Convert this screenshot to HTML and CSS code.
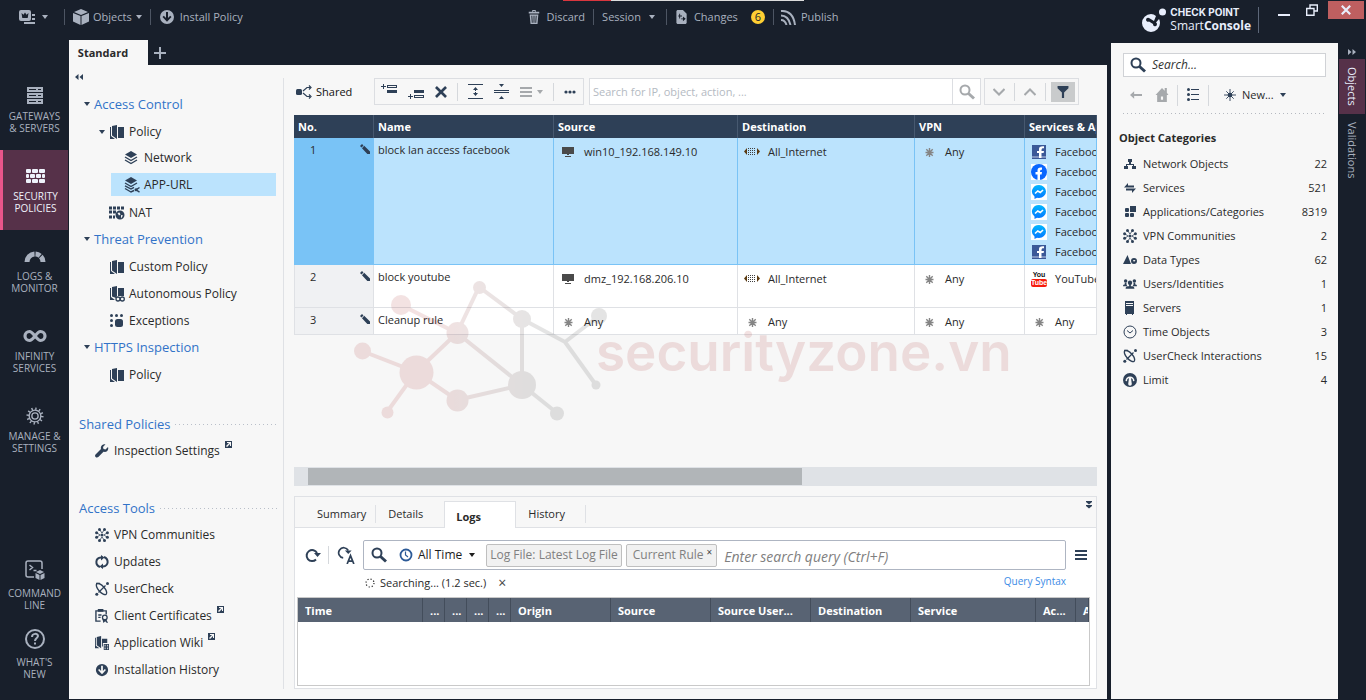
FILE: index.html
```html
<!DOCTYPE html>
<html lang="en">
<head>
<meta charset="utf-8">
<title>SmartConsole</title>
<link rel="stylesheet" href="styles.css">
</head>
<body>
<svg class="sprite" aria-hidden="true">
  <symbol id="i-caret" viewBox="0 0 6 4"><path d="M0 0h6L3 4z"/></symbol>
  <symbol id="i-menu-app" viewBox="0 0 16 16"><path fill-rule="evenodd" d="M2 1h8a2 2 0 0 1 2 2v7a2 2 0 0 1-2 2H2a2 2 0 0 1-2-2V3a2 2 0 0 1 2-2zM2.500 4l.8 5h5.400l.8-5-2 1.800L6 3.500 4.500 5.800z"/><path d="M13 5h3v2h-3zM13 9h3v2h-3zM5 13h11v2H5z"/></symbol>
  <symbol id="i-cube" viewBox="0 0 16 16"><path d="M8 0l7 3-7 3-7-3zM0 4l7.500 3v9L0 12.500zM16 4L8.500 7v9L16 12.500z"/></symbol>
  <symbol id="i-down" viewBox="0 0 16 16"><path fill-rule="evenodd" d="M8 1a7 7 0 1 0 0 14A7 7 0 0 0 8 1zM7 3h2v6l2.200-2.200L12.500 8 8 12.800 3.500 8l1.300-1.200L7 9z"/></symbol>
  <symbol id="i-trash" viewBox="0 0 14 16"><path fill-rule="evenodd" d="M5 0h4v2h4v2H1V2h4zM6 1v1h2V1zM2 5h10l-1 11H3zM4 6.500l.5 8h1l-.5-8zM6.500 6.500v8h1v-8zM9 6.500l-.5 8h1l.5-8z"/></symbol>
  <symbol id="i-changes" viewBox="0 0 12 15"><path fill-rule="evenodd" d="M1 0h6l4 4v10l-1 1H1l-1-1V1zM3 4v2H2v1h1v2h1V7h2V6H4V4zM7 7v2H5v1h2v2l3-2.500z"/></symbol>
  <symbol id="i-publish" viewBox="0 0 16 16"><path fill="none" stroke="currentColor" stroke-width="2" d="M1 2c8-1 13 5 14 14M1 6.500c5 0 8 3 9.500 9.500M1 11c3 0 4.500 1.500 5.500 5"/></symbol>
  <symbol id="i-logo" viewBox="0 0 26 26"><path fill-rule="evenodd" d="M10 7a9 9 0 1 0 9 9c0-1.500-.5-3-1-4l-3 3.500a2 2 0 1 1-3 1.500L8 14.500A2 2 0 1 1 8 11l5 3 2-5A9 9 0 0 0 10 7z"/><circle cx="21.500" cy="5" r="3.500"/></symbol>
  <symbol id="i-servers" viewBox="0 0 18 18"><path fill-rule="evenodd" d="M1 0h16v5H1zM3 2v1h7V2zM12 2v1h3V2zM1 6h16v5H1zM3 8v1h7V8zM12 8v1h3V8zM1 12h16v5H1zM3 14v1h7v-1zM12 14v1h3v-1z"/></symbol>
  <symbol id="i-wall" viewBox="0 0 19 14"><rect width="5" height="4" rx="1"/><rect x="6" width="6" height="4" rx="1"/><rect x="13" width="6" height="4" rx="1"/><rect y="5" width="3" height="4" rx="1"/><rect x="4" y="5" width="5" height="4" rx="1"/><rect x="10" y="5" width="5" height="4" rx="1"/><rect x="16" y="5" width="3" height="4" rx="1"/><rect y="10" width="5" height="4" rx="1"/><rect x="6" y="10" width="6" height="4" rx="1"/><rect x="13" y="10" width="6" height="4" rx="1"/></symbol>
  <symbol id="i-gauge" viewBox="0 0 22 12"><path fill="none" stroke="currentColor" stroke-width="5" stroke-dasharray="12 1 5 1 10" d="M3 12a8 8 0 0 1 16 0"/></symbol>
  <symbol id="i-infinity" viewBox="0 0 24 13"><path fill="none" stroke="currentColor" stroke-width="3.200" d="M12 6.500C9 10.500 8 11 6.500 11a4.500 4.500 0 0 1 0-9C10 2 14 11 17.500 11a4.500 4.500 0 0 0 0-9C16 2 15 2.500 12 6.500z"/></symbol>
  <symbol id="i-gear" viewBox="0 0 20 20"><g fill="none" stroke="currentColor"><circle cx="10" cy="10" r="8" stroke-width="3" stroke-dasharray="1.500 2.690"/><circle cx="10" cy="10" r="6.500" stroke-width="1.500"/><circle cx="10" cy="10" r="3.500" stroke-width="1.500"/></g></symbol>
  <symbol id="i-terminal" viewBox="0 0 20 20"><path fill="none" stroke="currentColor" stroke-width="1.500" d="M9 17H3a2 2 0 0 1-2-2V3a2 2 0 0 1 2-2h12a2 2 0 0 1 2 2v6M4.500 5l3 2.500-3 2.500M8.500 10.500h3"/><path d="M15 10l4 2-4 2-4-2zM10.500 13l4 2v5l-4-2zM19.500 13l-4 2v5l4-2z"/></symbol>
  <symbol id="i-help" viewBox="0 0 22 22"><g fill="none" stroke="currentColor" stroke-width="2"><circle cx="11" cy="11" r="9"/><path d="M8 9c0-4 6-4 6-1 0 2-3 2-3 5"/></g><path d="M10 14.500h2v2h-2z"/></symbol>
  <symbol id="i-book" viewBox="0 0 16 16"><path d="M1 3h1v9l4 3H1zM3 2l5-1v14l-5-3.500zM9 3h6v11H9z"/></symbol>
  <symbol id="i-book-inf" viewBox="0 0 16 16"><path d="M1 2h1v9l4 3H1zM3 1l5-1v10l-1 2-4-1.500zM9 2h6v8H9z"/><g fill="none" stroke="currentColor" stroke-width="1.300"><circle cx="9" cy="13" r="2"/><circle cx="13.300" cy="13" r="2"/></g></symbol>
  <symbol id="i-book-app" viewBox="0 0 16 16"><path fill-rule="evenodd" d="M0 2h1v9l4 3H0zM2 1l5-1v14l-5-3.500zM8 3h6v5H9v4H8zM10 9h6v7h-6zM11 10v2h1v-2zM14 10v2h1v-2zM11 13v2h1v-2zM14 13v2h1v-2z"/></symbol>
  <symbol id="i-layers" viewBox="0 0 16 16"><path d="M7 1l6 3.500L7 8 1 4.500z"/><path fill="none" stroke="currentColor" stroke-width="1.400" d="M1 7l6 3.500L13 7M1 10l6 3.500 6-3.500"/></symbol>
  <symbol id="i-layers-share" viewBox="0 0 16 16"><path d="M7 0l6 3.500L7 7 1 3.500z"/><path fill="none" stroke="currentColor" stroke-width="1.400" d="M1 6l6 3.500L13 6M1 8.800L7 12l3-1.700M1 11.500L7 15l3-1.500M15.500 10.500l-3.500 2.300 3.500 2.300"/><circle cx="12" cy="12.800" r="1.500"/></symbol>
  <symbol id="i-nat" viewBox="0 0 16 13"><path d="M0 0h3v3H0zM4 0h3v3H4zM8 0h3v3H8zM12 0h3v3h-3zM0 4h3v3H0zM4 4h3v3H4zM0 9h3v3H0zM4 9h2v3H4z"/><path fill-rule="evenodd" d="M11 4a4.500 4.500 0 1 0 0 9 4.500 4.500 0 0 0 0-9zM8.500 6.500l2-.5 1 2-1.500 1zM12 8.500l2 .5-2 3z"/></symbol>
  <symbol id="i-except" viewBox="-1 -1 16 16"><circle cx="1.500" cy="1.500" r="1.500"/><circle cx="6.500" cy="1.500" r="1.500"/><circle cx="11.500" cy="1.500" r="1.500"/><circle cx="1.500" cy="6.500" r="1.500"/><circle cx="1.500" cy="11.500" r="1.500"/><rect x="5" y="5" width="8" height="8" rx="2.500"/></symbol>
  <symbol id="i-wrench" viewBox="0 0 14 14"><path d="M13 3L10.500 5.500 8.500 5 8 3l2.500-2.700C8 -.5 5 2 6 5L.5 10.500c-1.500 2 1 4 2.800 2.600L8.500 7.800C12 8.500 14 6 13 3z"/></symbol>
  <symbol id="i-ext" viewBox="0 0 7 7"><path fill-rule="evenodd" d="M0 0h7v7H0zM2 1v1h2L1 5l1 1 3-3v2h1V1z"/></symbol>
  <symbol id="i-vpn" viewBox="0 0 14 14"><path stroke="currentColor" stroke-width=".8" d="M4.500 1.500L7 5l2.500-3.500M4.500 12.500L7 9l2.500 3.500M1.500 4.500L5 7 1.500 9.500M12.500 4.500L9 7l3.500 2.500" fill="none"/><circle cx="7" cy="7" r="1.600"/><circle cx="4.500" cy="1.600" r="1.500"/><circle cx="9.500" cy="1.600" r="1.500"/><circle cx="4.500" cy="12.400" r="1.500"/><circle cx="9.500" cy="12.400" r="1.500"/><circle cx="1.600" cy="4.800" r="1.500"/><circle cx="1.600" cy="9.200" r="1.500"/><circle cx="12.400" cy="4.800" r="1.500"/><circle cx="12.400" cy="9.200" r="1.500"/></symbol>
  <symbol id="i-update" viewBox="0 0 14 14"><path fill="none" stroke="currentColor" stroke-width="2" d="M5 12C0 10 0 3 6 2.500M9 2c5 2 5 9-1 9.500"/><path d="M6 0l3.500 2.500L6 5.500zM8 8.500V14l-3.500-2.500z"/></symbol>
  <symbol id="i-check" viewBox="0 0 14 14"><ellipse cx="6.500" cy="7" rx="7" ry="3" transform="rotate(48 6.500 7)" fill="none" stroke="currentColor" stroke-width="1.400"/><path stroke="currentColor" stroke-width="1.300" d="M1 1.500h4M3.500 10.500l7-7"/><circle cx="12.500" cy="1.500" r="1.500"/><circle cx="1.800" cy="12.200" r="1.500"/></symbol>
  <symbol id="i-cert" viewBox="0 0 15 15"><path fill="none" stroke="currentColor" stroke-width="1.500" d="M6 13H1V2h11v4M3.500 6.500H7M3.500 9H6"/><path d="M3 0h6v3H3zM8 11l4 0 2 4-2-.5L11 13l-2 2z"/><circle cx="10.500" cy="9" r="2.500" fill="none" stroke="currentColor" stroke-width="1.400"/></symbol>
  <symbol id="i-collapse" viewBox="0 0 8 6"><path d="M3.500 0v6L0 3zM8 0v6L4.500 3z"/></symbol>
  <symbol id="i-shared" viewBox="0 0 16 14"><rect y="4" width="6" height="6" rx="1.500"/><path fill="none" stroke="currentColor" stroke-width="1.200" d="M7 6l4-3.500h3M7 8l4 3.500h3M13 .5l2 2-2 2M13 9.500l2 2-2 2"/></symbol>
  <symbol id="i-add-above" viewBox="0 0 16 16"><path fill-rule="evenodd" d="M2 0h1v2h2v1H3v2H2V3H0V2h2zM6 1h10v3H6zM7 2v1h8V2zM6 6h10v3H6z"/></symbol>
  <symbol id="i-add-below" viewBox="0 0 16 16"><path fill-rule="evenodd" d="M6 6h10v3H6zM6 11h10v3H6zM7 12v1h8v-1zM2 10h1v2h2v1H3v2H2v-2H0v-1h2z"/></symbol>
  <symbol id="i-x" viewBox="0 0 10 10"><path fill="none" stroke="currentColor" stroke-width="2.200" d="M.8.8l8.400 8.400M9.200.8L.8 9.200"/></symbol>
  <symbol id="i-expand" viewBox="0 0 15 15"><path d="M0 0h15v1H0zM0 14h15v1H0zM7.500 3L10 6H8v1H7V6H5zM7.500 12L5 9h2V8h1v1h2z"/></symbol>
  <symbol id="i-squeeze" viewBox="0 0 15 15"><path d="M0 6h15v1H0zM0 8h15v1H0zM5 0h5L7.500 3zM5 15h5l-2.500-3z"/></symbol>
  <symbol id="i-lines" viewBox="0 0 12 10"><path d="M0 0h12v2H0zM0 4h12v2H0zM0 8h12v2H0z"/></symbol>
  <symbol id="i-dots" viewBox="0 0 12 4"><circle cx="2" cy="2" r="1.600"/><circle cx="6" cy="2" r="1.600"/><circle cx="10" cy="2" r="1.600"/></symbol>
  <symbol id="i-search" viewBox="0 0 16 16"><circle cx="6" cy="6" r="4.500" fill="none" stroke="currentColor" stroke-width="2"/><path stroke="currentColor" stroke-width="3" d="M9.500 9.500l5.500 5"/></symbol>
  <symbol id="i-chev-down" viewBox="0 0 12 8"><path fill="none" stroke="currentColor" stroke-width="2" d="M.5 1L6 6.500 11.500 1"/></symbol>
  <symbol id="i-chev-up" viewBox="0 0 12 8"><path fill="none" stroke="currentColor" stroke-width="2" d="M.5 7L6 1.500 11.500 7"/></symbol>
  <symbol id="i-funnel" viewBox="0 0 10 11"><path d="M0 0h10v2L6 6v5H4V6L0 2z"/></symbol>
  <symbol id="i-pencil" viewBox="0 0 10 10"><path d="M2 0l1.500 1.500-2 2L0 2zM4.200 1.800L10 7.500V10H7.300L2 4.300z"/></symbol>
  <symbol id="i-host" viewBox="0 0 12 10"><path d="M0 0h12v7H0zM5 7h2v1H5zM3 9h6v1H3z"/></symbol>
  <symbol id="i-net" viewBox="0 0 16 16"><path d="M0 7.500L3 4v7zM16 7.500L13 4v7z" fill="#5b3a10"/><path fill="none" stroke="#3e3e3e" stroke-dasharray="1 1" d="M4 4.500h8M4 6.500h8M4 8.500h8M4 10.500h8"/></symbol>
  <symbol id="i-any" viewBox="0 0 9 9"><path stroke="currentColor" stroke-width="1.400" d="M4.500 0v9M.5 4.500h8M1.300 1.300l6.400 6.400M7.700 1.300L1.300 7.700"/></symbol>
  <symbol id="i-fb-sq" viewBox="0 0 16 16"><path fill="#3b5998" d="M1 1h14v14H1z"/><path fill="#7d92bf" d="M1 12h14v2H1z"/><path fill="#fff" d="M8 14V9H6V7h2V5c0-2 1.500-3 5-2.700v2C11 4.200 10.500 4.500 10.500 7H13l-.4 2h-2.100v5z"/></symbol>
  <symbol id="i-fb-round" viewBox="0 0 16 16"><path fill="#fff" d="M0 0h16v16H0z"/><circle cx="8" cy="8" r="8" fill="#0866ff"/><path fill="#fff" d="M6.500 16v-5.500H4.500V8h2V6.500c0-2.500 1.500-3.500 4.500-3v2.200c-1.500-.1-2 .3-2 2.300h2l-.4 2.500H9V16z"/></symbol>
  <symbol id="i-msgr" viewBox="0 0 16 16"><path fill="#fff" d="M0 0h16v16H0z"/><path fill="url(#msgr)" d="M8 1a7 6.500 0 0 1 0 13l-2-.2L3.500 15v-2.500A7 6.500 0 0 1 8 1z"/><path fill="none" stroke="#fff" stroke-width="1.600" d="M4 9.500L6.800 7l2.500 1.500L12 6"/></symbol>
  <symbol id="i-refresh" viewBox="0 0 16 14"><path fill="none" stroke="currentColor" stroke-width="2" d="M11 11.500A5.500 5.500 0 1 1 12 5"/><path d="M9 5h7l-3.500 4z"/></symbol>
  <symbol id="i-auto" viewBox="0 0 16 16"><path fill="none" stroke="currentColor" stroke-width="1.500" d="M5.500 10.500A4.500 4.500 0 1 1 10 4M9 16l3-7.500 3 7.500M10 13.500h4"/><path d="M7 4h6l-3 3z"/></symbol>
  <symbol id="i-clock" viewBox="0 0 14 14"><circle cx="7" cy="7" r="5.500" fill="none" stroke="currentColor" stroke-width="1.800"/><path fill="none" stroke="currentColor" stroke-width="1.200" d="M6.500 3.500V7L9 9"/></symbol>
  <symbol id="i-spin" viewBox="0 0 10 10"><circle cx="5" cy="5" r="4" fill="none" stroke="currentColor" stroke-width="1.200" stroke-dasharray="1.200 1.950"/></symbol>
  <symbol id="i-dbl-down" viewBox="0 0 6 8"><path d="M0 0h6v1L3 3.500 0 1zM0 4h6v1L3 7.500 0 5z"/></symbol>
  <symbol id="i-back" viewBox="0 0 13 8"><path d="M4.500 0v3H13v2H4.500v3L0 4z"/></symbol>
  <symbol id="i-home" viewBox="0 0 12 13"><path fill-rule="evenodd" d="M6 0l2.500 2.500V0h2v4.500L12 6.500h-1.500V13h-9V6.500H0zM5 8v3h2V8z"/></symbol>
  <symbol id="i-list" viewBox="0 0 12 14"><path d="M4 1h8v1H4zM4 6h8v1H4zM4 11h8v1H4z"/><circle cx="1.500" cy="1.500" r="1.500"/><circle cx="1.500" cy="6.500" r="1.500"/><circle cx="1.500" cy="11.500" r="1.500"/></symbol>
  <symbol id="i-star" viewBox="0 0 13 13"><path stroke="currentColor" stroke-width="1" d="M6.500 0v13M0 6.500h13M2.500 2.500l8 8M10.500 2.500l-8 8"/><circle cx="6.500" cy="6.500" r="2.500"/></symbol>
  <symbol id="i-nodes" viewBox="-1 -2 14 14"><path d="M4 0h4v3H4zM0 7h4v3H0zM8 7h4v3H8zM5 3h2v2h3v2H9V6H3v1H2V5h3z"/></symbol>
  <symbol id="i-svc" viewBox="-1 -2 14 14"><path d="M4 0v2.500h6v2H0zM8 10V7.500H2v-2h10z"/></symbol>
  <symbol id="i-apps" viewBox="-1 -1 14 14"><rect x="1" y="2" width="4" height="4" rx="1"/><rect x="6" width="6" height="6"/><rect x="1" y="7" width="4" height="4" rx="1"/><rect x="6" y="7" width="4" height="4" rx="1"/></symbol>
  <symbol id="i-types" viewBox="0 -2 14 14"><path fill-rule="evenodd" d="M4.500 0L8 9H0zM11 3a3 3 0 1 0 0 6 3 3 0 0 0 0-6zM10 5h2.500L11 7z"/></symbol>
  <symbol id="i-users" viewBox="0 0 16 11"><circle cx="3" cy="2" r="2"/><circle cx="13" cy="2" r="2"/><circle cx="8" cy="4" r="2.500"/><path d="M0 8c0-2 1-2 2-2V4h2v2l1 2zM16 8c0-2-1-2-2-2V4h-2v2l-1 2zM3 11c0-3 2-3 4-3V5h2v3c2 0 4 0 4 3z"/></symbol>
  <symbol id="i-server" viewBox="0 0 14 14"><path fill-rule="evenodd" d="M2 0h9v13h-1v1H9v-1H4v1H3v-1H2zM3 2v1h7V2zM3 4v1h7V4z"/></symbol>
  <symbol id="i-time" viewBox="0 0 14 14"><circle cx="7" cy="7" r="6" fill="none" stroke="currentColor"/><path fill="none" stroke="currentColor" d="M4 5.500L7 8l3-2.500"/></symbol>
  <symbol id="i-limit" viewBox="0 0 14 14"><path fill-rule="evenodd" d="M7 0a7 7 0 1 0 0 14A7 7 0 0 0 7 0zM2.500 8a4.500 4.500 0 0 1 9 0l-1.500.3A3 3 0 0 0 8 5l.8 6a1.800 1.800 0 1 1-3.600 0L6 5a3 3 0 0 0-2 3.300z"/></symbol>
  <symbol id="i-min" viewBox="0 0 12 12"><path d="M0 10h12v2H0z"/></symbol>
  <symbol id="i-restore" viewBox="0 0 12 12"><path fill="none" stroke="currentColor" stroke-width="1.400" d="M4 4V1h7.300v6H8M.7 4.500H8v6.800H.7z"/></symbol>
  <symbol id="i-plus" viewBox="0 0 12 12"><path d="M5 0h2v5h5v2H7v5H5V7H0V5h5z"/></symbol>
  <defs><linearGradient id="msgr" x1="0" y1="0" x2="0" y2="1"><stop offset="0" stop-color="#00b8ff"/><stop offset="1" stop-color="#0874ff"/></linearGradient></defs>
</svg>

<div class="app">
  <header class="topbar">
    <div class="top-progress" aria-hidden="true"></div>
    <div class="top-group">
      <button class="top-btn top-app" aria-label="Menu"><svg class="ic16"><use href="#i-menu-app"/></svg><svg class="caret"><use href="#i-caret"/></svg></button>
      <button class="top-btn top-sep top-obj"><svg class="ic16"><use href="#i-cube"/></svg>Objects<svg class="caret"><use href="#i-caret"/></svg></button>
      <button class="top-btn top-sep"><svg class="ic16"><use href="#i-down"/></svg>Install Policy</button>
    </div>
    <div class="top-group">
      <button class="top-btn"><svg class="ic14"><use href="#i-trash"/></svg>Discard</button>
      <button class="top-btn top-sep top-ses">Session<svg class="caret"><use href="#i-caret"/></svg></button>
      <button class="top-btn top-sep"><svg class="ic14"><use href="#i-changes"/></svg>Changes<span class="badge">6</span></button>
      <button class="top-btn top-sep top-pub"><svg class="ic16"><use href="#i-publish"/></svg>Publish</button>
    </div>
    <div class="top-right">
      <div class="brand">
        <svg class="brand-mark"><use href="#i-logo"/></svg>
        <div><div class="brand-a">CHECK POINT</div><div class="brand-b">Smart<b>Console</b></div></div>
      </div>
      <button class="win-btn" aria-label="Minimize"><svg class="ic12"><use href="#i-min"/></svg></button>
      <button class="win-btn" aria-label="Restore"><svg class="ic12"><use href="#i-restore"/></svg></button>
      <button class="win-btn win-close" aria-label="Close"><svg class="ic10"><use href="#i-x"/></svg></button>
    </div>
  </header>

  <div class="body">
    <nav class="rail">
      <button class="rail-item"><svg class="r18"><use href="#i-servers"/></svg><span>GATEWAYS<br>&amp; SERVERS</span></button>
      <button class="rail-item rail-on"><svg class="r19"><use href="#i-wall"/></svg><span>SECURITY<br>POLICIES</span></button>
      <button class="rail-item"><svg class="r22"><use href="#i-gauge"/></svg><span>LOGS &amp;<br>MONITOR</span></button>
      <button class="rail-item"><svg class="r24"><use href="#i-infinity"/></svg><span>INFINITY<br>SERVICES</span></button>
      <button class="rail-item"><svg class="r20"><use href="#i-gear"/></svg><span>MANAGE &amp;<br>SETTINGS</span></button>
      <div class="rail-foot">
        <button class="rail-item"><svg class="r20"><use href="#i-terminal"/></svg><span>COMMAND<br>LINE</span></button>
        <button class="rail-item"><svg class="r22"><use href="#i-help"/></svg><span>WHAT'S<br>NEW</span></button>
      </div>
    </nav>

    <div class="main">
      <div class="doc-tabs">
        <button class="doc-tab">Standard</button>
        <button class="doc-add" aria-label="New tab"><svg class="ic12"><use href="#i-plus"/></svg></button>
      </div>
      <div class="work">
        <aside class="tree">
          <button class="tree-collapse" aria-label="Collapse"><svg class="dbl"><use href="#i-collapse"/></svg></button>
          <a class="row head" href="#"><svg class="caret"><use href="#i-caret"/></svg>Access Control</a>
          <a class="row l1 open" href="#"><svg class="caret"><use href="#i-caret"/></svg><svg class="ic16"><use href="#i-book"/></svg>Policy</a>
          <a class="row l2" href="#"><svg class="ic16"><use href="#i-layers"/></svg>Network</a>
          <a class="row l2 picked" href="#"><svg class="ic16"><use href="#i-layers-share"/></svg>APP-URL</a>
          <a class="row l1" href="#"><svg class="ic16"><use href="#i-nat"/></svg>NAT</a>
          <a class="row head" href="#"><svg class="caret"><use href="#i-caret"/></svg>Threat Prevention</a>
          <a class="row l1" href="#"><svg class="ic16"><use href="#i-book"/></svg>Custom Policy</a>
          <a class="row l1" href="#"><svg class="ic16"><use href="#i-book-inf"/></svg>Autonomous Policy</a>
          <a class="row l1" href="#"><svg class="ic16"><use href="#i-except"/></svg>Exceptions</a>
          <a class="row head" href="#"><svg class="caret"><use href="#i-caret"/></svg>HTTPS Inspection</a>
          <a class="row l1" href="#"><svg class="ic16"><use href="#i-book"/></svg>Policy</a>
          <h2 class="group">Shared Policies</h2>
          <a class="row tool" href="#"><svg class="ic14"><use href="#i-wrench"/></svg>Inspection Settings<svg class="ext"><use href="#i-ext"/></svg></a>
          <h2 class="group group-last">Access Tools</h2>
          <a class="row tool" href="#"><svg class="ic14"><use href="#i-vpn"/></svg>VPN Communities</a>
          <a class="row tool" href="#"><svg class="ic14"><use href="#i-update"/></svg>Updates</a>
          <a class="row tool" href="#"><svg class="ic14"><use href="#i-check"/></svg>UserCheck</a>
          <a class="row tool" href="#"><svg class="ic14"><use href="#i-cert"/></svg>Client Certificates<svg class="ext"><use href="#i-ext"/></svg></a>
          <a class="row tool" href="#"><svg class="ic14"><use href="#i-book-app"/></svg>Application Wiki<svg class="ext"><use href="#i-ext"/></svg></a>
          <a class="row tool" href="#"><svg class="ic14"><use href="#i-down"/></svg>Installation History</a>
        </aside>

        <section class="policy">
          <div class="toolbar">
            <span class="shared"><svg class="ic16"><use href="#i-shared"/></svg>Shared</span>
            <div class="box tools">
              <button aria-label="Add rule above"><svg class="ic16"><use href="#i-add-above"/></svg></button>
              <button aria-label="Add rule below"><svg class="ic16"><use href="#i-add-below"/></svg></button>
              <button aria-label="Delete"><svg class="ic12"><use href="#i-x"/></svg></button>
              <i class="bar"></i>
              <button aria-label="Expand"><svg class="ic15"><use href="#i-expand"/></svg></button>
              <button aria-label="Collapse rows"><svg class="ic15"><use href="#i-squeeze"/></svg></button>
              <button class="dim" aria-label="Rows"><svg class="ic12"><use href="#i-lines"/></svg><svg class="caret"><use href="#i-caret"/></svg></button>
              <i class="bar"></i>
              <button aria-label="More"><svg class="ic12"><use href="#i-dots"/></svg></button>
            </div>
            <div class="box find">
              <input type="text" aria-label="Search rules" placeholder="Search for IP, object, action, ...">
              <button aria-label="Search"><svg class="ic16"><use href="#i-search"/></svg></button>
            </div>
            <div class="box steps">
              <button class="dim" aria-label="Next"><svg class="ic12"><use href="#i-chev-down"/></svg></button>
              <i class="bar"></i>
              <button class="dim" aria-label="Previous"><svg class="ic12"><use href="#i-chev-up"/></svg></button>
              <i class="bar"></i>
              <button class="filter" aria-label="Filter"><svg class="ic12"><use href="#i-funnel"/></svg></button>
            </div>
          </div>

          <div class="rules-area">
            <table class="rules">
              <colgroup><col class="c-no"><col class="c-name"><col class="c-src"><col class="c-dst"><col class="c-vpn"><col></colgroup>
              <thead><tr><th>No.</th><th>Name</th><th>Source</th><th>Destination</th><th>VPN</th><th>Services &amp; Applications</th></tr></thead>
              <tbody>
                <tr class="sel">
                  <td class="no"><div><span>1</span><svg class="ic10"><use href="#i-pencil"/></svg></div></td>
                  <td>block lan access facebook</td>
                  <td><div class="obj"><svg class="ic12"><use href="#i-host"/></svg>win10_192.168.149.10</div></td>
                  <td><div class="obj"><svg class="ic16"><use href="#i-net"/></svg>All_Internet</div></td>
                  <td><div class="obj any"><svg class="ic9"><use href="#i-any"/></svg>Any</div></td>
                  <td>
                    <div class="obj"><svg class="ic16"><use href="#i-fb-sq"/></svg>Facebook</div>
                    <div class="obj"><svg class="ic16"><use href="#i-fb-round"/></svg>Facebook</div>
                    <div class="obj"><svg class="ic16"><use href="#i-msgr"/></svg>Facebook</div>
                    <div class="obj"><svg class="ic16"><use href="#i-msgr"/></svg>Facebook</div>
                    <div class="obj"><svg class="ic16"><use href="#i-msgr"/></svg>Facebook</div>
                    <div class="obj"><svg class="ic16"><use href="#i-fb-sq"/></svg>Facebook</div>
                  </td>
                </tr>
                <tr class="mid">
                  <td class="no"><div><span>2</span><svg class="ic10"><use href="#i-pencil"/></svg></div></td>
                  <td>block youtube</td>
                  <td><div class="obj"><svg class="ic12"><use href="#i-host"/></svg>dmz_192.168.206.10</div></td>
                  <td><div class="obj"><svg class="ic16"><use href="#i-net"/></svg>All_Internet</div></td>
                  <td><div class="obj any"><svg class="ic9"><use href="#i-any"/></svg>Any</div></td>
                  <td><div class="obj"><span class="yt"><span>You</span><span class="yt-b">Tube</span></span>YouTube</div></td>
                </tr>
                <tr>
                  <td class="no"><div><span>3</span><svg class="ic10"><use href="#i-pencil"/></svg></div></td>
                  <td>Cleanup rule</td>
                  <td><div class="obj any"><svg class="ic9"><use href="#i-any"/></svg>Any</div></td>
                  <td><div class="obj any"><svg class="ic9"><use href="#i-any"/></svg>Any</div></td>
                  <td><div class="obj any"><svg class="ic9"><use href="#i-any"/></svg>Any</div></td>
                  <td><div class="obj any"><svg class="ic9"><use href="#i-any"/></svg>Any</div></td>
                </tr>
              </tbody>
            </table>
            <div class="mark">
              <svg class="mark-net" viewBox="350 275 265 150">
                <defs><linearGradient id="fade" gradientUnits="userSpaceOnUse" x1="430" y1="0" x2="540" y2="0"><stop offset="0" stop-color="#a01a1a"/><stop offset="1" stop-color="#2c2c2c"/></linearGradient></defs>
                <path fill="none" stroke="url(#fade)" stroke-width="4" d="M401 305L457 333L479 287L522 319L565 342L599 316M565 342L596 385M457 333L416 372L457 400L522 385L557 413M457 333L522 385V319M362 351L416 372L387 412"/>
                <g fill="url(#fade)"><circle cx="401" cy="305" r="10"/><circle cx="479.500" cy="287.500" r="6.500"/><circle cx="457.500" cy="333" r="11"/><circle cx="362.500" cy="351" r="8.500"/><circle cx="416.500" cy="372.500" r="17"/><circle cx="387.500" cy="412.500" r="6"/><circle cx="457.500" cy="400.500" r="11"/><circle cx="522" cy="385" r="14"/><circle cx="522" cy="319" r="9"/><circle cx="599" cy="316" r="8"/><circle cx="596" cy="385" r="4.500"/><circle cx="557" cy="413.500" r="7"/></g>
              </svg>
              <span class="mark-text">securityzone.vn</span>
            </div>
          </div>

          <div class="hscroll"><div class="hthumb"></div></div>

          <div class="detail">
            <div class="tabs">
              <button class="tab">Summary</button>
              <button class="tab">Details</button>
              <button class="tab tab-on">Logs</button>
              <button class="tab tab-end">History</button>
              <button class="tabs-hide" aria-label="Hide"><svg class="dbl-v"><use href="#i-dbl-down"/></svg></button>
            </div>
            <div class="logs">
              <div class="query-row">
                <button class="q-btn" aria-label="Refresh"><svg class="ic16"><use href="#i-refresh"/></svg></button>
                <i class="bar"></i>
                <button class="q-btn" aria-label="Auto refresh"><svg class="ic18"><use href="#i-auto"/></svg></button>
                <div class="query">
                  <svg class="ic16"><use href="#i-search"/></svg>
                  <button class="range"><svg class="ic14 blue"><use href="#i-clock"/></svg>All Time<svg class="caret"><use href="#i-caret"/></svg></button>
                  <button class="chip">Log File: Latest Log File</button>
                  <button class="chip chip-x">Current Rule<span>×</span></button>
                  <input type="text" aria-label="Search query" placeholder="Enter search query (Ctrl+F)">
                </div>
                <button class="q-btn q-menu" aria-label="Options"><svg class="ic12"><use href="#i-lines"/></svg></button>
              </div>
              <div class="status"><svg class="ic10"><use href="#i-spin"/></svg><span>Searching... (1.2 sec.)</span><button aria-label="Cancel">×</button><a href="#">Query Syntax</a></div>
              <div class="log-box">
                <table class="log">
                  <colgroup><col class="k-time"><col class="k-dot"><col class="k-dot"><col class="k-dot"><col class="k-dot"><col class="k-col"><col class="k-col"><col class="k-col"><col class="k-col"><col class="k-time"><col class="k-act"><col></colgroup>
                  <thead><tr><th>Time</th><th>...</th><th>...</th><th>...</th><th>...</th><th>Origin</th><th>Source</th><th>Source User...</th><th>Destination</th><th>Service</th><th>Ac...</th><th>Access</th></tr></thead>
                </table>
              </div>
            </div>
          </div>
        </section>
      </div>
    </div>

    <aside class="objects">
      <label class="obj-search"><svg class="ic16"><use href="#i-search"/></svg><input type="text" placeholder="Search..." aria-label="Search objects"></label>
      <div class="obj-tools">
        <button class="dim" aria-label="Back"><svg class="ic12"><use href="#i-back"/></svg></button>
        <button class="dim" aria-label="Home"><svg class="ic14"><use href="#i-home"/></svg></button>
        <i class="bar"></i>
        <button aria-label="List"><svg class="ic14"><use href="#i-list"/></svg></button>
        <i class="bar"></i>
        <button class="new"><svg class="ic12"><use href="#i-star"/></svg>New...<svg class="caret"><use href="#i-caret"/></svg></button>
      </div>
      <h2>Object Categories</h2>
      <ul>
        <li><svg class="ic14"><use href="#i-nodes"/></svg><span>Network Objects</span>22</li>
        <li><svg class="ic14"><use href="#i-svc"/></svg><span>Services</span>521</li>
        <li><svg class="ic14"><use href="#i-apps"/></svg><span>Applications/Categories</span>8319</li>
        <li><svg class="ic14"><use href="#i-vpn"/></svg><span>VPN Communities</span>2</li>
        <li><svg class="ic14"><use href="#i-types"/></svg><span>Data Types</span>62</li>
        <li><svg class="ic14"><use href="#i-users"/></svg><span>Users/Identities</span>1</li>
        <li><svg class="ic14"><use href="#i-server"/></svg><span>Servers</span>1</li>
        <li><svg class="ic14"><use href="#i-time"/></svg><span>Time Objects</span>3</li>
        <li><svg class="ic14"><use href="#i-check"/></svg><span>UserCheck Interactions</span>15</li>
        <li><svg class="ic14"><use href="#i-limit"/></svg><span>Limit</span>4</li>
      </ul>
    </aside>
    <div class="strip">
      <button class="strip-fold" aria-label="Fold"><svg class="dbl flip"><use href="#i-collapse"/></svg></button>
      <button class="strip-tab strip-on">Objects</button>
      <button class="strip-tab">Validations</button>
    </div>
  </div>
</div>
</body>
</html>
```
FILE: styles.css
```css
* { box-sizing: border-box; }
body { margin: 0; font: 11px/16px "Open Sans", "Noto Sans", sans-serif; color: #2a2a2a; background: #181f2b; }
button, input { font: inherit; color: inherit; background: none; border: 0; padding: 0; margin: 0; }
input { min-width: 0; outline: 0; }
a { color: inherit; text-decoration: none; }
h2 { margin: 0; }
svg { fill: currentColor; flex: none; display: block; }
.sprite { position: absolute; width: 0; height: 0; }
.ic9 { width: 9px; height: 9px; }
.ic10 { width: 10px; height: 10px; }
.ic12 { width: 12px; height: 12px; }
.ic14 { width: 14px; height: 14px; }
.ic15 { width: 15px; height: 15px; }
.ic16 { width: 16px; height: 16px; }
.ic18 { width: 18px; height: 18px; }
.caret { width: 6px; height: 4px; }
.dbl { width: 8px; height: 6px; }
.flip { transform: scaleX(-1); }
.dbl-v { width: 6px; height: 8px; }
.bar { width: 1px; height: 18px; background: #d5d8dc; }
.dim { color: #a6a9ac; }

.app { display: flex; flex-direction: column; height: 100vh; padding-bottom: 1px; }

.topbar { position: relative; display: grid; grid-template-columns: 1fr auto 1fr; height: 40px; color: #a9b1bf; }
.top-progress { position: absolute; top: 0; left: 41.200%; width: 241px; height: 1px; background: linear-gradient(90deg, #d9363e 20%, #dcdcdc 20%); }
.top-group { display: flex; align-items: center; height: 34px; }
.top-btn { display: flex; align-items: center; gap: 5px; height: 16px; padding: 0 8px; }
.top-app { padding: 0 16px 0 19px; gap: 7px; }
.top-sep { border-left: 1px solid #4d5563; }
.top-obj { gap: 4px; }
.top-ses { gap: 8px; padding-right: 11px; }
.top-pub { padding-left: 6px; }
.badge { width: 14px; height: 14px; margin-left: 8px; border-radius: 50%; background: #ffcf33; color: #181f2b; line-height: 14px; text-align: center; }
.top-right { display: flex; justify-content: flex-end; align-items: flex-start; color: #e8eefc; }
.brand { display: flex; gap: 3px; height: 26px; margin: 7px 19px 0 0; padding-right: 7px; border-right: 1px solid #5d6779; }
.brand-mark { width: 26px; height: 26px; }
.brand-a { font: bold 10px/11px Inter, sans-serif; }
.brand-b { font-size: 12px; line-height: 16px; }
.win-btn { display: grid; place-items: center; height: 20px; margin-right: 16px; }
.win-btn + .win-btn { margin-right: 10px; }
.win-btn.win-close { width: 36px; height: 18px; margin: 1px 2px 0 0; background: #bf5f60; }

.body { flex: 1; display: flex; min-height: 0; }
.rail { width: 69px; display: flex; flex-direction: column; padding-top: 30px; color: #a9b1bf; }
.rail-item { display: flex; flex-direction: column; align-items: center; gap: 5px; height: 80px; padding-top: 17px; font-size: 10px; line-height: 12px; }
.rail-item svg { height: 18px; }
.rail-on { margin-right: 1px; background: #563149; border-left: 3px solid #e8558a; color: #eef2fb; }
.r18 { width: 18px; }
.r19 { width: 19px; }
.r20 { width: 20px; }
.r22 { width: 22px; }
.r24 { width: 24px; }
.rail-foot { margin-top: auto; padding-bottom: 18px; }
.rail-foot .rail-item { width: 100%; height: 69px; padding: 0; gap: 6px; }
.rail-foot .rail-item + .rail-item { height: 53px; }
.rail-foot svg { height: 22px; }

.main { flex: 1; min-width: 0; display: flex; flex-direction: column; margin-right: 4px; }
.doc-tabs { display: flex; height: 25px; }
.doc-tab { width: 79px; padding-right: 11px; background: #f7f7f7; font-weight: bold; }
.doc-add { padding: 0 6px; color: #a9b1bf; }
.work { flex: 1; display: flex; min-height: 0; background: #f7f7f7; }

.tree { position: relative; width: 214px; display: flex; flex-direction: column; }
.tree::after { content: ""; position: absolute; right: -1px; top: 13px; bottom: 10px; width: 1px; background: #dfe1e5; }
.tree-collapse { height: 26px; padding: 0 6px 2px; color: #2e4057; }
.row { display: flex; align-items: center; gap: 4px; height: 27px; font-size: 12px; color: #2a2a2a; }
.row svg { color: #2e4057; }
.row.head, .group { font-size: 13px; font-weight: normal; color: #3273c8; }
.row.head { padding: 0 0 2px 15px; }
.row.l1 { padding-left: 40px; }
.row.open { padding-left: 30px; }
.row.l2 { margin-left: 42px; padding: 0 0 2px 13px; }
.row.picked { height: 23px; margin: 1px 7px 3px 42px; padding-bottom: 0; background: #bbe3fd; }
.row.tool { padding-left: 26px; gap: 5px; }
.ext { width: 7px; height: 7px; margin-bottom: 12px; }
.group { display: flex; align-items: center; gap: 5px; height: 26px; margin: 23px 5px 0 10px; }
.group::after { content: ""; flex: 1; height: 1px; background: repeating-linear-gradient(90deg, #b9bfc9 0 1px, transparent 1px 4px); }
.group-last { margin-top: 31px; }

.policy { flex: 1; min-width: 0; display: flex; flex-direction: column; padding: 13px 10px 10px 11px; }
.toolbar { display: flex; height: 27px; }
.shared { display: flex; align-items: center; gap: 4px; width: 80px; padding-left: 2px; color: #111; }
.shared svg, .tools, .filter { color: #2e4057; }
.box { display: flex; align-items: center; border: 1px solid #dcdee2; }
.tools { gap: 11px; padding: 0 7px 0 6px; margin-right: 5px; }
.tools button { display: flex; align-items: center; gap: 5px; }
.tools .bar { margin: 0 -1px; }
.find { flex: 1; background: #fff; margin-right: 3px; }
.find input { flex: 1; height: 100%; padding: 0 3px; }
.find input::placeholder { color: #b4bac2; opacity: 1; }
.find button { width: 28px; height: 25px; display: grid; place-items: center; border-left: 1px solid #dcdee2; color: #a6a9ac; }
.steps { gap: 9px; padding: 0 3px 0 8px; margin-right: 18px; }
.filter { display: grid; place-items: center; width: 24px; height: 20px; margin-left: -4px; background: #c9cbcc; }

.rules-area { position: relative; flex: 1; margin-top: 10px; min-height: 0; overflow: hidden; }
.rules, .log { width: 100%; table-layout: fixed; border-collapse: separate; border-spacing: 0; }
.c-no { width: 80px; } .c-name { width: 180px; } .c-src { width: 184px; } .c-dst { width: 177px; } .c-vpn { width: 110px; }
.rules th, .rules td { overflow: hidden; white-space: nowrap; text-align: left; vertical-align: top; padding: 4px 0 0 4px; }
.rules th { height: 23px; background: #2e4057; color: #fff; border-right: 1px solid #475970; }
.rules td { height: 27px; background: #fff; border: solid #dfe1e5; border-width: 0 1px 1px 0; }
.rules .mid td { height: 43px; }
.rules .sel td { height: 127px; background: #bbe3fd; border-color: #79c3f6; }
.rules td.no { background: #f0f1f3; border-left: 1px solid #dfe1e5; }
.rules .sel td.no { background: #79c3f6; border-color: #79c3f6; }
.no div { display: flex; justify-content: space-between; padding: 0 3px 0 11px; }
.no svg { color: #2e4057; margin-top: 2px; }
.obj { display: grid; grid-template-columns: 20px auto; column-gap: 6px; align-items: center; justify-items: center; justify-content: start; height: 20px; }
.obj svg { color: #4a4a4a; }
.obj.any svg { color: #858585; }
.yt { width: 16px; font: bold 7px/8px "Liberation Sans", sans-serif; color: #111; text-align: center; }
.yt span { display: block; }
.yt .yt-b { background: #f61c0d; color: #fff; border-radius: 2px; }
.mark { position: absolute; left: 56px; top: 160px; display: flex; opacity: .12; pointer-events: none; }
.mark-net { width: 265px; height: 150px; }
.mark-text { margin: 48px 0 0 -19px; font: 600 53px/58px Inter, sans-serif; color: #a01a1a; }

.hscroll { height: 19px; margin-bottom: 10px; padding: 1px 0 1px 14px; background: #dfe2e6; }
.hthumb { width: 62.600%; height: 17px; background: #b1b5b8; }

.detail { height: 193px; display: flex; flex-direction: column; border: 1px solid #dfe1e5; }
.tabs { display: flex; align-items: flex-end; height: 31px; border-bottom: 1px solid #dfe1e5; }
.tab { height: 18px; padding: 0 9px 0 12px; margin-bottom: 4px; text-align: left; }
.tab:first-child { padding-left: 22px; }
.tab:nth-child(2) { width: 69px; border-left: 1px solid #dfe1e5; }
.tab.tab-on { width: 72px; height: 27px; margin-bottom: -1px; padding: 3px 0 0 11px; font-weight: bold; background: #fff; border: 1px solid #dfe1e5; border-bottom: 0; }
.tab.tab-end { width: 70px; border-right: 1px solid #dfe1e5; }
.tabs-hide { margin: 0 4px 18px auto; color: #2e4057; }
.logs { flex: 1; display: flex; flex-direction: column; padding: 12px 6px 2px 2px; background: #fff; }
.query-row { display: flex; align-items: center; height: 30px; color: #2e4057; }
.q-btn { padding: 0 7px 0 8px; }
.q-btn + .query { margin-left: 1px; }
.q-menu { padding: 0 3px 0 9px; }
.query { flex: 1; min-width: 0; display: flex; align-items: center; height: 30px; padding: 0 7px; border: 1px solid #aeb5c2; border-radius: 2px; }
.range { display: flex; align-items: center; gap: 5px; margin: 0 11px 0 12px; font-size: 12px; color: #1d1d1d; }
.range .caret { margin-left: 2px; }
.blue { color: #2c5a97; }
.chip { height: 23px; padding: 0 3px; margin-right: 4px; border: 1px solid #bfbfbf; border-radius: 2px; background: #f1f1f1; color: #808080; font-size: 12px; white-space: nowrap; }
.chip-x { display: flex; gap: 3px; padding: 2px 4px 0 6px; }
.chip-x span { font-size: 10px; line-height: 10px; color: #444; }
.query input { flex: 1; height: 100%; padding: 2px 3px 0; font-size: 14px; font-style: italic; }
.query input::placeholder { color: #808080; opacity: 1; }
.status { display: flex; align-items: center; height: 26px; padding: 0 24px 0 68px; gap: 5px; }
.status button { margin-left: 7px; font-size: 14px; color: #444; }
.status a { margin-left: auto; margin-bottom: 4px; font-size: 10px; color: #3c8be6; }
.log-box { flex: 1; margin-top: 1px; border: 1px solid #c9c9c9; overflow: hidden; }
.k-time { width: 125px; } .k-dot { width: 22px; } .k-col { width: 100px; } .k-act { width: 40px; }
.log th { height: 24px; padding: 1px 0 0 7px; overflow: hidden; white-space: nowrap; text-align: left; color: #fff; background: #586373; border-right: 1px solid #434d5b; }

.objects { width: 227px; margin-top: 3px; padding: 10px 11px 0 12px; background: #f7f7f7; color: #2a2a2a; }
.objects svg { color: #2e4057; }
.objects .dim svg { color: #a6a9ac; }
.obj-search { display: flex; align-items: center; gap: 6px; height: 24px; padding-left: 6px; margin-right: 1px; background: #fff; border: 1px solid #d0d2d6; }
.obj-search input { flex: 1; font-size: 12px; font-style: italic; }
.obj-search input::placeholder { color: #333; opacity: 1; }
.obj-tools { display: flex; align-items: center; height: 37px; gap: 8px; padding: 0 0 1px 7px; margin-right: 2px; background: repeating-linear-gradient(90deg, #b5b9c0 0 1px, transparent 1px 4px) bottom / 100% 1px no-repeat; }
.obj-tools button:first-child { margin-right: 5px; }
.obj-tools .bar { height: 21px; }
.obj-tools .new { display: flex; align-items: center; gap: 6px; margin-left: 7px; }
.objects h2 { margin: 16px 0 6px -4px; font-size: 12px; line-height: 16px; }
.objects h2 { font-size: 11px; }
.objects ul { margin: 0; padding: 0; list-style: none; }
.objects li { display: flex; align-items: center; gap: 6px; height: 24px; }
.objects li span { flex: 1; }
.strip { width: 28px; display: flex; flex-direction: column; padding: 0 1px; color: #a9b1bf; }
.strip-fold { display: grid; place-items: center; height: 19px; padding-top: 4px; }
.strip-tab { writing-mode: vertical-rl; height: 55px; width: 26px; line-height: 26px; text-align: center; }
.strip-on { background: #563149; color: #e8eefc; }
.strip-on + .strip-tab { height: 72px; }
```
